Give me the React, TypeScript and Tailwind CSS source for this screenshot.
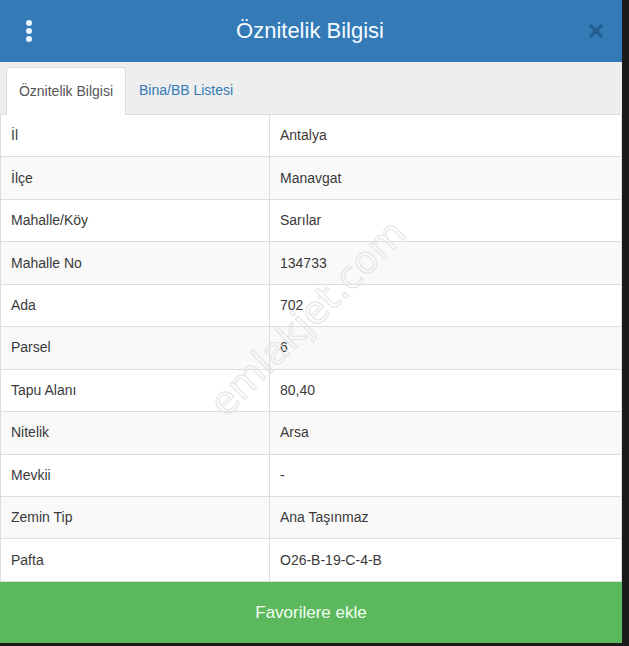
import { X } from 'lucide-react';

const rows: [string, string][] = [
  ['İl', 'Antalya'],
  ['İlçe', 'Manavgat'],
  ['Mahalle/Köy', 'Sarılar'],
  ['Mahalle No', '134733'],
  ['Ada', '702'],
  ['Parsel', '6'],
  ['Tapu Alanı', '80,40'],
  ['Nitelik', 'Arsa'],
  ['Mevkii', '-'],
  ['Zemin Tip', 'Ana Taşınmaz'],
  ['Pafta', 'O26-B-19-C-4-B'],
];

export default function App() {
  return (
    <div className="w-[629px] h-[646px] bg-[#1b1b1b] overflow-hidden font-['Liberation_Sans',Arial,sans-serif]">
      <div className="w-[622px] h-[643px] flex flex-col bg-white relative">
        {/* Header */}
        <div className="h-[62px] bg-[#337ab7] flex items-center px-[24px] shrink-0">
          <div className="w-[10px] flex flex-col items-center gap-[2px]">
            <span className="w-[6px] h-[6px] rounded-full bg-[#e8f6ff]" />
            <span className="w-[6px] h-[6px] rounded-full bg-[#e8f6ff]" />
            <span className="w-[6px] h-[6px] rounded-full bg-[#e8f6ff]" />
          </div>
          <h1 className="flex-1 text-center text-[22px] text-[#f4fbff] leading-none">Öznitelik Bilgisi</h1>
          <X size={20} strokeWidth={4} className="text-[#245e92] mr-[-8px]" />
        </div>

        {/* Tabs */}
        <div className="h-[53px] bg-[#eeeeee] border-b border-[#dddddd] flex items-end pl-[6px] shrink-0">
          <div className="h-[48px] w-[120px] bg-white border border-b-0 border-[#dddddd] rounded-t-[3px] mb-[-1px] flex items-center justify-center text-[14px] text-[#555555]">
            Öznitelik Bilgisi
          </div>
          <div className="h-[47px] flex items-center px-[13px] text-[14px] text-[#337ab7]">Bina/BB Listesi</div>
        </div>

        {/* Table */}
        <div className="flex-1 border-l border-r border-[#dddddd]">
          {rows.map(([k, v], i) => (
            <div
              key={k}
              className={`h-[42.45px] flex border-b border-[#dddddd] text-[14px] text-[#3a3a3a] ${i % 2 === 1 ? 'bg-[#f9f9f9]' : 'bg-white'}`}
            >
              <div className="w-[269px] border-r border-[#dddddd] flex items-center pl-[10px]">{k}</div>
              <div className="flex-1 flex items-center pl-[10px]">{v}</div>
            </div>
          ))}
        </div>

        {/* Watermark */}
        <div className="absolute left-[308px] top-[318px] -translate-x-1/2 -translate-y-1/2 -rotate-45 whitespace-nowrap text-[38px] text-transparent pointer-events-none select-none [-webkit-text-stroke:1px_#e3e3e3] font-['DejaVu_Sans',sans-serif]">
          emlakjet.com
        </div>

        {/* Button */}
        <button className="h-[61px] w-full bg-[#5cb85c] text-[#f2fff2] text-[17px] shrink-0">Favorilere ekle</button>
      </div>
    </div>
  );
}
